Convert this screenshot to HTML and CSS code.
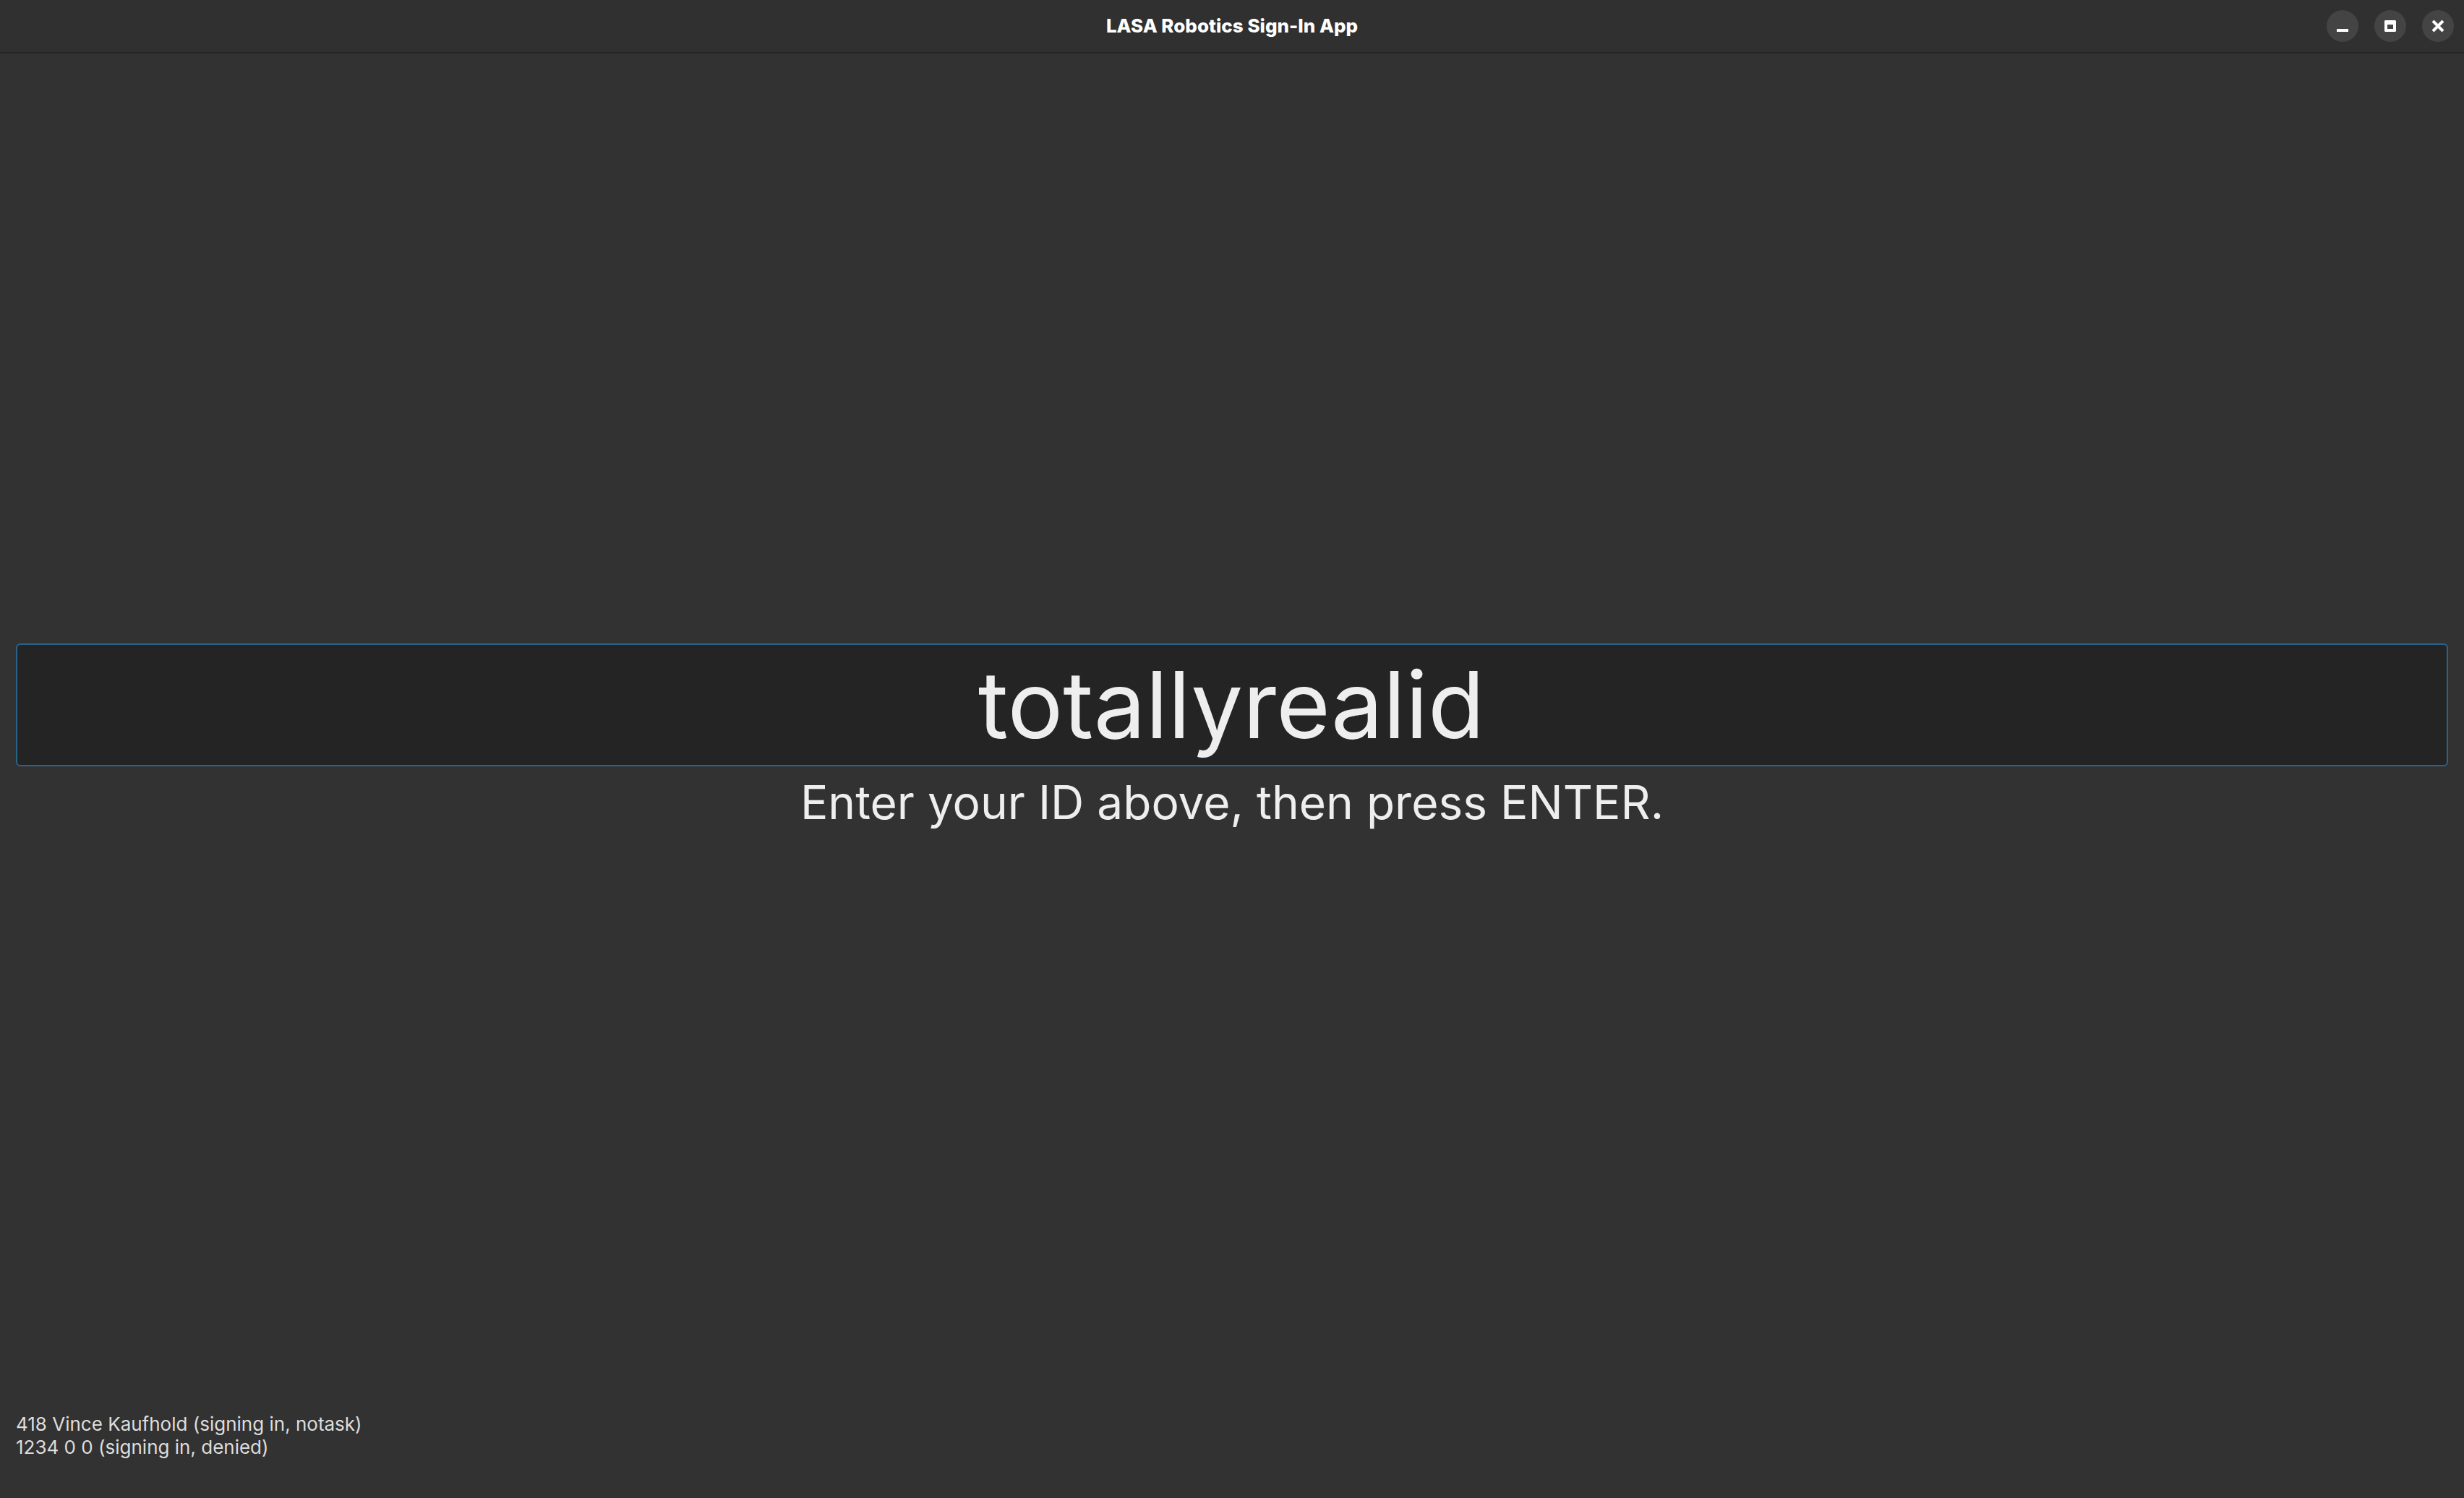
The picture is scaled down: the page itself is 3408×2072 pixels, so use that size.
FILE: index.html
```html
<!DOCTYPE html>
<html lang="en">
<head>
<meta charset="utf-8">
<title>LASA Robotics Sign-In App</title>
<link rel="stylesheet" href="styles.css">
</head>
<body>
<header class="titlebar">
  <h1 class="title">LASA Robotics Sign-In App</h1>
  <div class="controls">
    <button class="control" type="button" aria-label="Minimize"><svg viewBox="0 0 44 44"><path d="M14 26h16v4H14z"/></svg></button>
    <button class="control" type="button" aria-label="Maximize"><svg viewBox="0 0 44 44"><path fill-rule="evenodd" d="M15 14h14l1 1v14l-1 1H15l-1-1V15zM18 20v6h8v-6z"/></svg></button>
    <button class="control" type="button" aria-label="Close"><svg viewBox="0 0 44 44"><path class="cross" d="M15 15l14 14M29 15L15 29"/></svg></button>
  </div>
</header>
<main class="content">
  <form class="entry">
    <input class="id-input" id="member-id" type="text" value="totallyrealid" autocomplete="off" spellcheck="false">
    <label class="prompt" for="member-id">Enter your ID above, then press ENTER.</label>
  </form>
  <div class="log">
    <p>418 Vince Kaufhold (signing in, notask)</p>
    <p>1234 0 0 (signing in, denied)</p>
  </div>
</main>
</body>
</html>
```
FILE: styles.css
```css
* { box-sizing: border-box; }
body {
  margin: 0;
  min-height: 100vh;
  display: flex;
  flex-direction: column;
  background: #323232;
  color: #eeeeee;
  font-family: Inter, sans-serif;
}
.titlebar {
  display: grid;
  grid-template-columns: 1fr auto 1fr;
  align-items: center;
  height: 74px;
  padding: 0 14px;
  background: #303030;
  border-bottom: 2px solid #252525;
}
.title {
  grid-column: 2;
  margin: 0;
  color: #fff;
  font-size: 26px;
  line-height: 32px;
  font-weight: 800;
}
.controls { display: flex; justify-content: flex-end; gap: 22px; }
.control {
  width: 44px;
  height: 44px;
  padding: 0;
  border: 0;
  border-radius: 50%;
  background: #444;
}
.control svg { display: block; fill: #fff; }
.cross { stroke: #fff; stroke-width: 4; }
.content {
  flex: 1;
  display: grid;
  grid-template-rows: 1fr auto 1fr;
  padding: 0 22px 54px;
}
.entry {
  grid-row: 2;
  display: flex;
  flex-direction: column;
  padding-bottom: 52px;
  text-align: center;
}
.id-input {
  width: 100%;
  height: 170px;
  padding: 0 2px 2px 0;
  border: 2px solid #2a6389;
  border-radius: 6px;
  outline: 0;
  background: #242424;
  color: #eeeeee;
  font: 128px/160px Inter, sans-serif;
  text-align: center;
}
.prompt { font-size: 64px; line-height: 80px; padding-top: 10px; }
.log {
  grid-row: 3;
  align-self: end;
  color: #ddd;
  font-size: 26px;
  line-height: 32px;
}
.log p { margin: 0; }
```
